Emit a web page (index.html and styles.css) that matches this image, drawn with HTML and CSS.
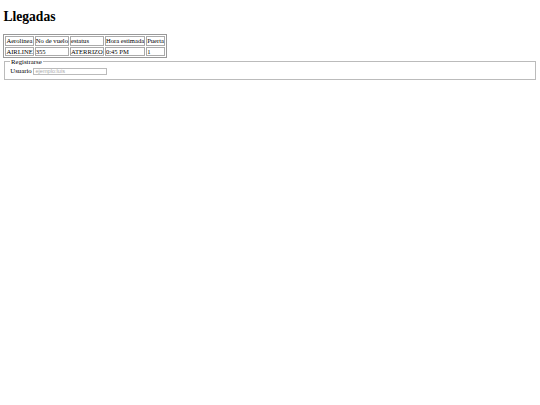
FILE: index.html
```html
<!DOCTYPE html>
<html>
<head>
<meta charset="utf-8">
<link rel="stylesheet" href="styles.css">
</head>
<body>
<h1 class="title">Llegadas</h1>
<table class="board">
<tr><td>Aerolinea</td><td>No de vuelo</td><td>estatus</td><td>Hora estimada</td><td>Puerta</td></tr>
<tr><td>AIRLINE</td><td>355</td><td>ATERRIZO</td><td>0:45 PM</td><td>1</td></tr>
</table>
<form class="form">
<fieldset class="box">
<legend class="legend">Registrarse</legend>
<label class="label">Usuario</label> <input class="field" type="text" placeholder="ejemplo:luis">
</fieldset>
</form>
</body>
</html>
```
FILE: styles.css
```css
html { background: #fff; }
body {
  margin: 3.4px;
  font-family: "Liberation Serif", serif;
  font-size: 6.8px;
  color: #000;
}
.title {
  font-size: 13.6px;
  font-weight: bold;
  margin: 6px 0 9px 0;
}
.board {
  border: 1px solid #999;
  border-spacing: 1px;
  font-size: 6.6px;
}
.board td {
  border: 1px solid #aaa;
  padding: 0;
  line-height: 7.2px;
  white-space: nowrap;
}
.form { margin: 0; }
.box {
  margin: 0 0.85px;
  padding: 1.5px 5px 4.5px 5px;
  border: 1px solid #bbb;
}
.legend {
  padding: 0 0.85px;
  line-height: 7.8px;
}
.label { line-height: 7.8px; }
.field {
  font-family: "Liberation Sans", sans-serif;
  font-size: 5.6px;
  width: 74px;
  height: 7px;
  box-sizing: border-box;
  padding: 0 1px;
  border: 1px solid #bbb;
  margin: 0;
  vertical-align: baseline;
}
.field::placeholder { color: #aaa; }
```
